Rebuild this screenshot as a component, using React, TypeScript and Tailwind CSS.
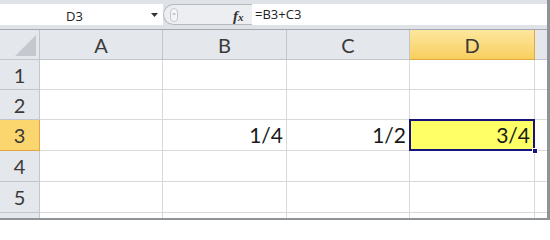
import React from "react";

const cols = [
  { id: "A", w: "w-[123px]" },
  { id: "B", w: "w-[124px]" },
  { id: "C", w: "w-[123px]" },
  { id: "D", w: "w-[125px]" },
];

const rowH = ["h-[30px]", "h-[30px]", "h-[31px]", "h-[31px]", "h-[31px]"];

const data: Record<string, string> = { B3: "1/4", C3: "1/2", D3: "3/4" };

export default function App() {
  return (
    <div className="w-[550px] h-[220px] overflow-hidden bg-[#dde1e6] flex flex-col border-r-[3px] border-b-[2px] border-[#8f9296]" style={{ fontFamily: "Lato, 'Open Sans', sans-serif" }}>
      {/* Formula bar */}
      <div className="h-[30px] shrink-0 flex flex-col bg-[#dfe3e8] border-b border-[#a6aab0]">
        <div className="h-[4px] shrink-0" />
        <div className="h-[21px] flex items-stretch">
          <div className="w-[163px] bg-white flex items-center relative">
            <span className="absolute left-[66px] top-[3px] text-[13px] text-[#222]" style={{ fontFamily: "'Open Sans', sans-serif" }}>D3</span>
            <svg className="absolute left-[151px] top-[9px]" width="7" height="4" viewBox="0 0 7 4"><path d="M0 0 H7 L3.5 4 Z" fill="#333" /></svg>
          </div>
          <div className="w-[89px] bg-[#eceef1] rounded-l-[11px] border-l border-t border-b border-[#b6bbc1] relative">
            <svg className="absolute left-[6px] top-[3px]" width="8" height="14" viewBox="0 0 8 14">
              <rect x="0.5" y="0.5" width="7" height="13" rx="3.5" fill="#f4f5f7" stroke="#c4c8cd" />
              <line x1="2.5" y1="6" x2="5.5" y2="6" stroke="#9aa0a7" />
            </svg>
            <span className="absolute left-[69px] top-[0px] text-[15px] font-bold italic text-[#333]" style={{ fontFamily: "'Liberation Serif', serif" }}>
              f<span className="text-[11px]">x</span>
            </span>
          </div>
          <div className="flex-1 bg-white flex items-center pl-[3px] text-[13px] text-[#222]" style={{ fontFamily: "'Open Sans', sans-serif" }}>
            =B3+C3
          </div>
        </div>
      </div>

      {/* Column headers */}
      <div className="h-[30px] shrink-0 flex">
        <div className="w-[40px] shrink-0 bg-[#e4e7eb] border-r border-b border-[#c2c6cc] relative">
          <svg className="absolute left-[15px] top-[5px]" width="21" height="21" viewBox="0 0 21 21"><path d="M21 0 V21 H0 Z" fill="#c5c9cf" /></svg>
        </div>
        {cols.map((c) =>
          c.id === "D" ? (
            <div key={c.id} className={`${c.w} shrink-0 flex items-center justify-center text-[20px] text-[#3a3a3a] border-r border-b border-[#e2a940] bg-gradient-to-b from-[#fde79c] to-[#f8cf5e]`}>
              {c.id}
            </div>
          ) : (
            <div key={c.id} className={`${c.w} shrink-0 flex items-center justify-center text-[20px] text-[#3a3a3a] bg-[#e4e7eb] border-r border-b border-[#c2c6cc]`}>
              {c.id}
            </div>
          )
        )}
        <div className="flex-1 bg-[#e4e7eb] border-b border-[#c2c6cc]" />
      </div>

      {/* Rows */}
      {rowH.map((h, i) => {
        const r = i + 1;
        const sel = r === 3;
        return (
          <div key={r} className={`${h} shrink-0 flex`}>
            <div
              className={`w-[40px] shrink-0 flex items-center justify-center text-[20px] text-[#3a3a3a] border-r border-b ${
                sel ? "bg-[#fbd56d] border-[#e0a640]" : "bg-[#e4e7eb] border-[#c2c6cc]"
              }`}
            >
              {r}
            </div>
            {cols.map((c) => {
              const key = c.id + r;
              const val = data[key];
              if (key === "D3") {
                return (
                  <div key={key} className={`${c.w} shrink-0 relative bg-white border-r border-b border-[#d9d9d9]`}>
                    <div className="absolute left-[-1px] top-[-1px] right-[-1px] bottom-[-1px] bg-[#ffff66] border-2 border-[#14147a] flex items-center justify-end pr-[3px] text-[21px] text-[#1a1a1a]">
                      {val}
                    </div>
                    <div className="absolute right-[-4px] bottom-[-4px] w-[6px] h-[6px] bg-[#14147a] border border-white" />
                  </div>
                );
              }
              return (
                <div key={key} className={`${c.w} shrink-0 flex items-center justify-end pr-[3px] text-[21px] text-[#1a1a1a] bg-white border-r border-b border-[#d9d9d9]`}>
                  {val}
                </div>
              );
            })}
            <div className="flex-1 bg-white border-b border-[#d9d9d9]" />
          </div>
        );
      })}
      <div className="flex-1 flex">
        <div className="w-[40px] shrink-0 bg-[#e4e7eb] border-r border-[#c2c6cc]" />
        {cols.map((c) => (
          <div key={c.id} className={`${c.w} shrink-0 bg-white border-r border-[#d9d9d9]`} />
        ))}
        <div className="flex-1 bg-white" />
      </div>
    </div>
  );
}
